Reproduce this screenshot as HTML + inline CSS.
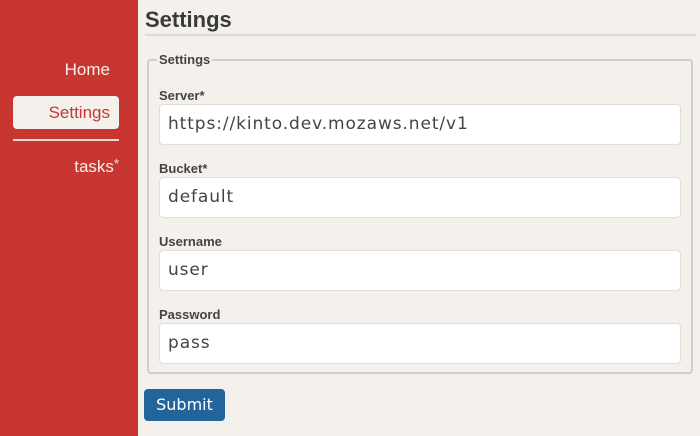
<!DOCTYPE html>
<html><head><style>
*{box-sizing:border-box;margin:0;padding:0}
body{width:700px;height:436px;background:#f4f1ec;font-family:"Liberation Sans",sans-serif;position:relative;overflow:hidden}
.side{position:absolute;left:0;top:0;width:138px;height:436px;background:#c73631}
.nav{position:absolute;right:28px;color:#fbeee9;font-size:17px}
.pill{position:absolute;left:13px;top:96px;width:106px;height:33px;background:#f4f1ec;border-radius:4px;color:#c73631;font-size:17px;text-align:right;padding-right:9px;line-height:33px}
.hr{position:absolute;left:13px;top:139px;width:106px;height:2px;background:#f1d8d3}
h1{position:absolute;left:145px;top:7px;font-size:22px;font-weight:bold;color:#3a3a3a}
.tl{position:absolute;left:145px;top:34px;width:551px;height:2px;background:#dedad3}
.fs{position:absolute;left:147px;top:59px;width:546px;height:315px;border:2px solid #d3cfc8;border-radius:4px}
.lg{position:absolute;left:157px;top:52px;background:#f4f1ec;padding:0 2px;font-size:13px;font-weight:bold;color:#444}
.lb{position:absolute;left:159px;font-size:13px;font-weight:bold;color:#444}
.in{position:absolute;left:159px;width:522px;height:41px;background:#fff;border:1px solid #e2ded7;border-radius:4px;font-family:"DejaVu Sans",sans-serif;font-size:17px;letter-spacing:0.9px;color:#444;padding-left:8px;line-height:39px}
.btn{position:absolute;left:144px;top:389px;width:81px;height:32px;background:#23649a;border-radius:4px;color:#fff;font-family:"DejaVu Sans",sans-serif;font-size:16px;text-align:center;line-height:32px}
</style></head><body>
<div class="side">
<div class="nav" style="top:60px">Home</div>
<div class="pill">Settings</div>
<div class="hr"></div>
<div class="nav" style="top:156px;right:19px;font-size:17px">tasks<span style="font-size:13px;vertical-align:4px">*</span></div>
</div>
<h1>Settings</h1>
<div class="tl"></div>
<div class="fs"></div>
<div class="lg">Settings</div>
<div class="lb" style="top:88px">Server*</div>
<div class="in" style="top:104px">https://kinto.dev.mozaws.net/v1</div>
<div class="lb" style="top:161px">Bucket*</div>
<div class="in" style="top:177px">default</div>
<div class="lb" style="top:234px">Username</div>
<div class="in" style="top:250px">user</div>
<div class="lb" style="top:307px">Password</div>
<div class="in" style="top:323px">pass</div>
<div class="btn">Submit</div>
</body></html>
